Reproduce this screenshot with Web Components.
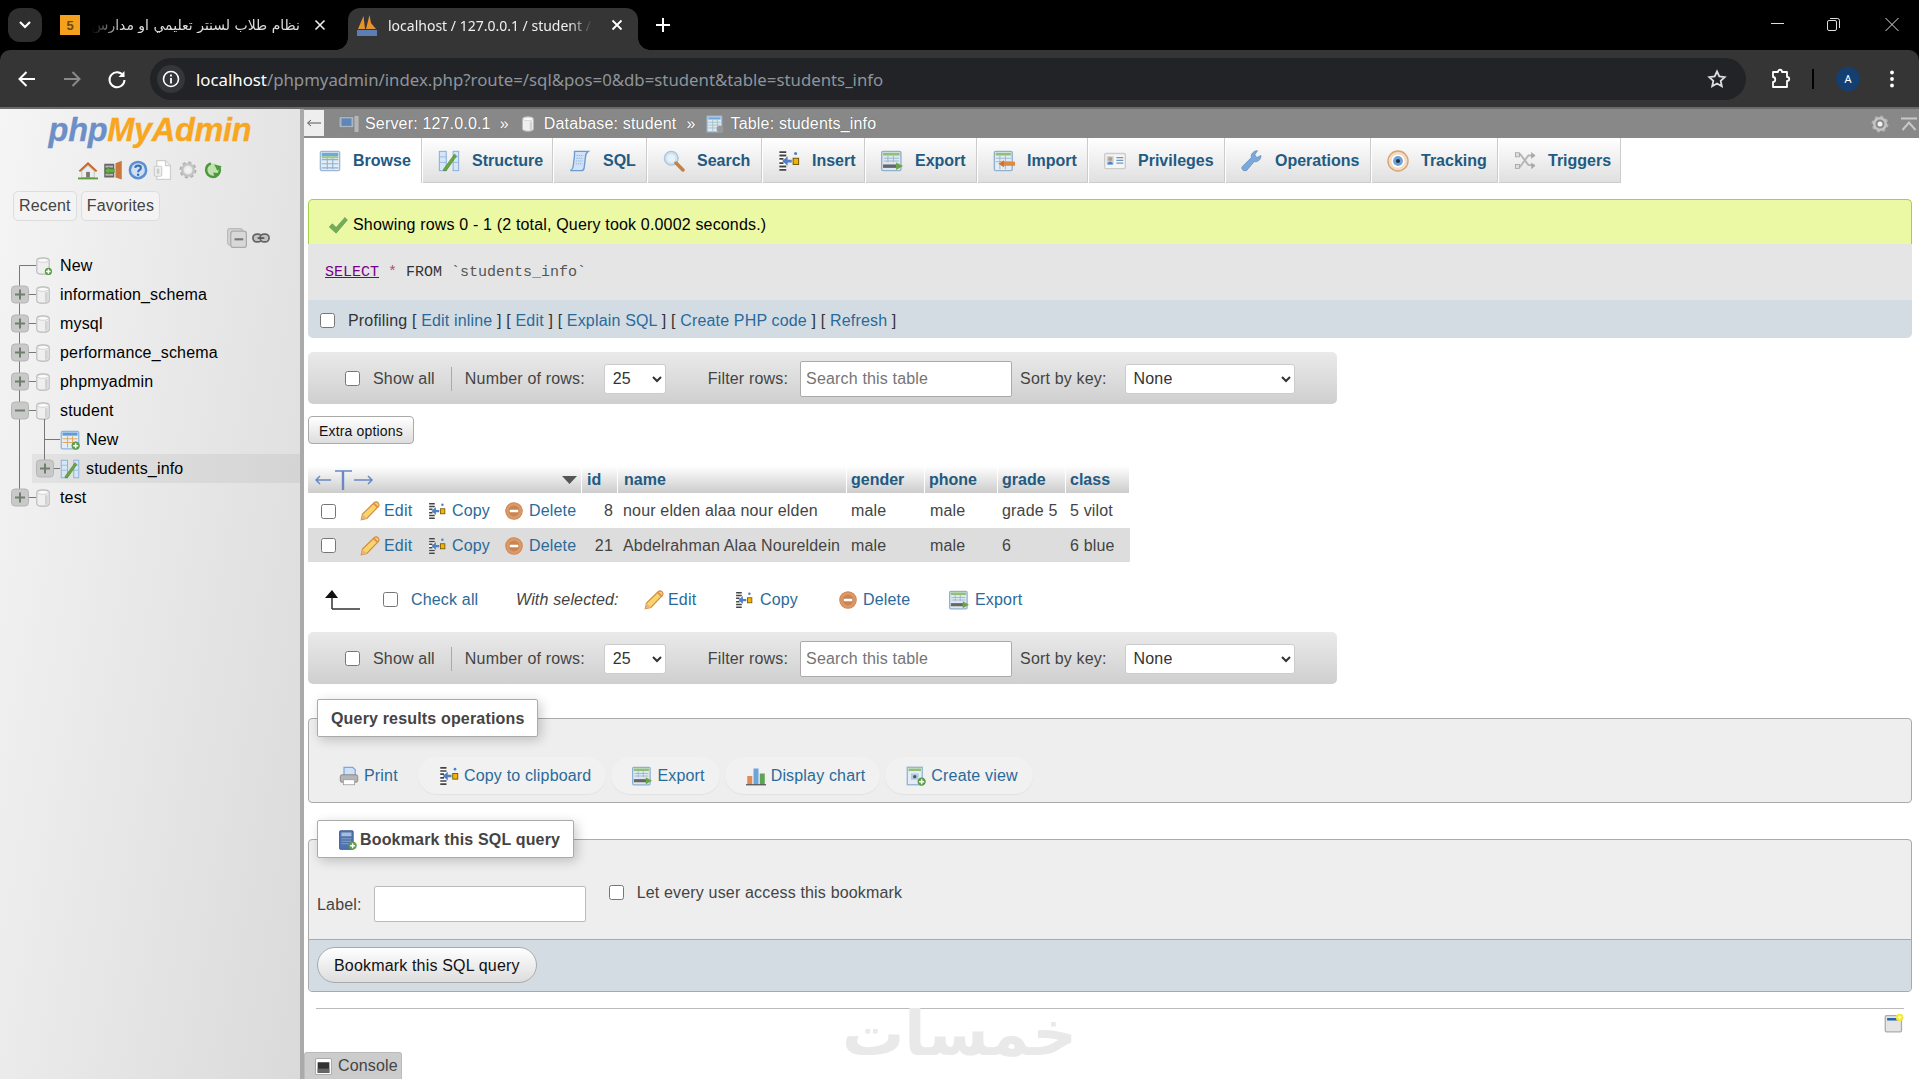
<!DOCTYPE html>
<html lang="en"><head><meta charset="utf-8"><title>phpMyAdmin</title>
<style>
html,body{margin:0;padding:0;height:100%;overflow:hidden;background:#fff;font:16px "Liberation Sans",Arial,sans-serif;color:#444;letter-spacing:.17px}
body{display:flex;flex-direction:column;height:1079px}
pma-app{flex:1;min-height:0}
</style>
<script>
const ICONS={
home:'<path d="M0.5 8.5 8 1.5l7.5 7-1.2 1L8 4 1.7 9.500z" fill="#c9692d"/><path d="M3 9 8 4.500 13 9v5H3z" fill="#eee" stroke="#aaa" stroke-width=".5"/><rect x="6.500" y="9.500" width="3" height="4.500" fill="#777"/><rect x="0" y="14" width="16" height="1.500" fill="#5e9a3c"/>',
exit:'<rect x="1" y="3" width="8" height="11" fill="#666"/><rect x="2" y="4.500" width="6" height="1.500" fill="#bbb"/><rect x="2" y="11" width="6" height="1.500" fill="#bbb"/><path d="M10 2.500 15 .5v15l-5-1.500z" fill="#c9773a"/><path d="M1 8.500 5 5.500V7h4v3H5v1.500z" fill="#6aad46" stroke="#3f7d2a" stroke-width=".4"/>',
help:'<circle cx="8" cy="8" r="7.500" fill="#5b8fd0"/><circle cx="8" cy="8" r="5.500" fill="#cfe0f5"/><path d="M5.800 6.300C6 3.900 10.300 3.900 10.300 6.300 10.300 7.900 8.100 7.900 8.100 9.700" fill="none" stroke="#3a6fb5" stroke-width="1.700"/><circle cx="8.100" cy="11.800" r="1" fill="#3a6fb5"/>',
docs:'<path d="M3 .5h7l4 4v11H3z" fill="#fff" stroke="#cfcfcf"/><path d="M10 .5v4h4" fill="#eee" stroke="#cfcfcf"/><rect x="1" y="5" width="6" height="8" rx="1" fill="#eee" stroke="#bbb" stroke-width=".6"/><rect x="3" y="7" width="2" height="4" fill="#ccc"/>',
gear:'<circle cx="8" cy="8" r="5.600" fill="none" stroke="#b0b0b0" stroke-width="2.400" stroke-dasharray="2.400 2"/><circle cx="8" cy="8" r="4.600" fill="none" stroke="#c4c4c4" stroke-width="2"/><circle cx="8" cy="8" r="2" fill="#f2f2f2"/>',
reload:'<circle cx="8" cy="8" r="5.500" fill="#bfe2ae" stroke="#4b9a3a" stroke-width="2" stroke-dasharray="24 8"/><path d="M9 3.500 15 5l-3.500 3.500zM8 10l5 .5-3 4z" fill="#4b9a3a"/>',
collapse:'<rect x=".5" y=".5" width="12" height="13" rx="2" fill="#d5d5d5" stroke="#bbb"/><rect x="3" y="2.500" width="12.500" height="13" rx="2" fill="#d8d8d8" stroke="#aaa"/><rect x="6" y="8.200" width="7" height="1.700" fill="#777"/>',
link:'<rect x=".8" y="4.500" width="8" height="7" rx="3.500" fill="#c4c4c4" stroke="#666" stroke-width="1.500"/><rect x="7.200" y="4.500" width="8" height="7" rx="3.500" fill="#c4c4c4" stroke="#666" stroke-width="1.500"/><rect x="5" y="7.300" width="6" height="1.500" fill="#555"/>',
db:'<path d="M2.500 3c0-3 11-3 11 0v10c0 3-11 3-11 0z" fill="#efefef" stroke="#b9b9b9"/><ellipse cx="8" cy="3" rx="5" ry="1.700" fill="#fafafa" stroke="#c4c4c4" stroke-width=".6"/><path d="M11 5.500v8.500" stroke="#d2d2d2" stroke-width="2.400"/>',
dbnew:'<path d="M2.500 3c0-3 11-3 11 0v10c0 3-11 3-11 0z" fill="#efefef" stroke="#b9b9b9"/><ellipse cx="8" cy="3" rx="5" ry="1.700" fill="#fafafa" stroke="#c4c4c4" stroke-width=".6"/><circle cx="12.800" cy="12.800" r="3.200" fill="#5a9d45"/><path d="M12.800 10.800v4M10.800 12.800h4" stroke="#fff" stroke-width="1.300"/>',
browse:'<rect x="1" y="1" width="14" height="14" rx="1" fill="#e3edf7" stroke="#9bb8d5"/><rect x="2" y="2" width="12" height="2.500" fill="#6fa8dc"/><path d="M2 7h12M2 10h12M2 13h12M6 5v9M10 5v9" stroke="#8fb0cf" stroke-width=".8"/><rect x="2" y="4.500" width="12" height="1.500" fill="#9fca7c"/>',
tablenew:'<rect x="1" y="1" width="14" height="14" rx="1" fill="#e3edf7" stroke="#8fb3dc"/><rect x="2" y="2" width="12" height="2.500" fill="#5f9bd8"/><path d="M2 7h12M2 10h12M6 5v9M10 5v9" stroke="#e0a860" stroke-width=".8"/><circle cx="12.500" cy="12.500" r="3.300" fill="#5a9d45"/><path d="M12.500 10.500v4M10.500 12.500h4" stroke="#fff" stroke-width="1.200"/>',
structure:'<rect x="1" y="1" width="5" height="14" fill="#d6e6f5" stroke="#8fb3dc" stroke-width=".8"/><rect x="11" y="1" width="4" height="14" fill="#d6e6f5" stroke="#8fb3dc" stroke-width=".8"/><path d="M1 5h5M1 9h5M11 5h4M11 9h4" stroke="#8fb3dc" stroke-width=".6"/><path d="M4 14 12 3l1.500 1.300L6 15H4z" fill="#6aa544" stroke="#3f7d2a" stroke-width=".4"/>',
server:'<rect x="0" y="2" width="12" height="9" rx="1" fill="#aab6c4" stroke="#777" stroke-width=".6"/><rect x="2" y="3.500" width="8" height="6" fill="#5f87b5"/><rect x="3" y="11" width="6" height="2" fill="#888"/><rect x="12" y="1" width="4" height="14" fill="#b5b5b5" stroke="#777" stroke-width=".5"/>',
table:'<rect x="1" y="1" width="13" height="14" fill="#dfe9f3" stroke="#9bb8d5"/><rect x="2" y="2" width="11" height="2" fill="#6fa8dc"/><path d="M2 6.500h11M2 9h11M2 11.500h11M6 4v10M10 4v10" stroke="#9bb" stroke-width=".7"/><circle cx="12.500" cy="12.500" r="3" fill="#999"/>',
sql:'<path d="M4 1h10c-1.500 1-2 2-2 4l-1 8c-.2 1.500-1 2-2 2H1c1-.5 1.700-1.200 2-3l1-8C4 2.500 4 2 4 1z" fill="#cfe2f7" stroke="#6d9bd0"/><path d="M5.500 4h5M5.200 6h5M5 8h5M4.800 10h5" stroke="#8db4e0" stroke-width=".8" stroke-dasharray="1 .6"/>',
search:'<circle cx="6" cy="6" r="5" fill="#cfe2f0" stroke="#a8c4dc"/><circle cx="6" cy="6" r="3" fill="#e8f1f8"/><path d="M9.500 9.500 14.500 14.500" stroke="#c9813f" stroke-width="2.600" stroke-linecap="round"/>',
insert:'<rect x="1" y="1" width="5" height="14" fill="#fff"/><path d="M1 1.500h5M1 4h5M1 6.500h3M1 9.500h3M1 12h5M1 14.500h5" stroke="#444" stroke-width="1.300"/><path d="M3 8 7 4.500V7h3v2H7v2.500z" fill="#4f7fc4"/><rect x="11" y="6" width="4" height="4.500" fill="#f4b400" stroke="#6b5200" stroke-width=".7"/><circle cx="12.800" cy="2.500" r="1.100" fill="#4f7fc4"/>',
export:'<rect x="0.500" y="1" width="14" height="14" rx="1" fill="#dde8f2" stroke="#8fb0cf"/><rect x="1.500" y="2" width="12" height="2" fill="#8fc075"/><path d="M2 6h11M2 8h11M5 4v5M9 4v5" stroke="#9db5cc" stroke-width=".7"/><rect x="1.500" y="10.500" width="10" height="2.500" fill="#666"/><path d="M11 9 16 11.700 11 14.500z" fill="#6aa544"/>',
import:'<rect x="1" y="1" width="13" height="14" rx="1" fill="#e3edf7" stroke="#8fb0cf"/><rect x="2" y="2" width="11" height="2" fill="#8fc075"/><path d="M2 6h11M2 8.500h11M5 4v10M9 4v10" stroke="#9db5cc" stroke-width=".7"/><rect x="7" y="8.500" width="9" height="3" fill="#e08a40"/><path d="M4 10 8 7.500v5z" fill="#d9702a"/>',
priv:'<rect x=".5" y="2.500" width="15" height="11" rx="1" fill="#f5f5f5" stroke="#ccc"/><rect x="2" y="4.500" width="5" height="6" fill="#b9cfe6"/><circle cx="4.500" cy="6.500" r="1.500" fill="#cf9a55"/><path d="M2.500 10.500c0-2.500 4-2.500 4 0z" fill="#4f7fc4"/><path d="M9 5.500h5M9 7.500h5M9 9.500h5" stroke="#6f97c0"/>',
ops:'<path d="M2 15c-1.500-.8-1.700-2-1-3L7.500 5.500C7 3 9 .5 12 .5l-2 3 1.500 2 3-1.500c.3 3-2.500 5-5 4.500L4 15z" fill="#7aa8d8" stroke="#5c8bbd" stroke-width=".5"/>',
track:'<circle cx="8" cy="8" r="7.300" fill="#f3dcc3" stroke="#d9a36d"/><circle cx="8" cy="8" r="4.800" fill="#fff"/><circle cx="8" cy="8" r="3.600" fill="#6fa3d8"/><circle cx="8" cy="8" r="1.500" fill="#234"/>',
triggers:'<path d="M1 3h3.500l6 8H15M1 12h3.500l6-8H15" fill="none" stroke="#b5b5b5" stroke-width="1.400"/><path d="M12.500 1.500 15.500 4l-3 2.500zM12.500 9 15.500 11.500l-3 2.500z" fill="#a8a8a8"/><rect x="1" y="2" width="3" height="3" fill="#ddd" stroke="#999" stroke-width=".5"/><rect x="1" y="10.500" width="3" height="3" fill="#ddd" stroke="#999" stroke-width=".5"/>',
check:'<path d="M1 9.500 3.500 7 6.500 10 13.500 2 15.500 4 6.500 14.500z" fill="#74ad5a" stroke="#5c9444" stroke-width=".5"/>',
edit:'<path d="M1 15l1-4.500L11.500 1.200c1-.8 2.200-.6 3 .3s.9 2 .2 2.900L5.500 14z" fill="#f7d56b" stroke="#d28a3c" stroke-width=".9"/><path d="M1 15l1-4.500 3.500 3.500z" fill="#eab37a"/><path d="M11 2l3.500 3.300" stroke="#e08c5c" stroke-width="1.400"/>',
del:'<circle cx="8" cy="8" r="7.300" fill="#db9a6a" stroke="#cf8550"/><circle cx="8" cy="8" r="4.800" fill="#c98450"/><rect x="4.200" y="6.900" width="7.600" height="2.300" rx=".6" fill="#fff"/>',
print:'<path d="M4 1h7l2 2v5H4z" fill="#cfe2f7" stroke="#7ea8d5"/><rect x="1" y="7" width="14" height="6" rx="1.500" fill="#b5b5b5" stroke="#777" stroke-width=".6"/><rect x="3.500" y="11" width="9" height="4" fill="#fff" stroke="#999" stroke-width=".6"/>',
chart:'<rect x="1" y="8" width="4" height="7" fill="#e08d55"/><rect x="6" y="2" width="4" height="13" fill="#6aa5dd"/><rect x="11" y="6" width="4" height="9" fill="#5fa356"/><rect x="0" y="14.500" width="16" height="1" fill="#555"/>',
view:'<rect x="1" y="1" width="12" height="14" fill="#e3edf7" stroke="#8fb0cf"/><rect x="2" y="2" width="10" height="2" fill="#8fc075"/><rect x="4" y="6" width="6" height="5" fill="#b5c9dd"/><circle cx="7" cy="8.500" r="1.300" fill="#456"/><circle cx="12.500" cy="12.500" r="3.300" fill="#5a9d45"/><path d="M12.500 10.500v4M10.500 12.500h4" stroke="#fff" stroke-width="1.200"/>',
bookmark:'<rect x="2" y="0.500" width="11" height="15" rx="1" fill="#4f72ae" stroke="#33508a" stroke-width=".6"/><rect x="3.500" y="2" width="8" height="3" fill="#a9bcdc"/><path d="M3.500 7h8M3.500 9h8M3.500 11h6" stroke="#8ea5cf" stroke-width=".7"/><circle cx="12.500" cy="12.500" r="3.300" fill="#5a9d45"/><path d="M12.500 10.500v4M10.500 12.500h4" stroke="#fff" stroke-width="1.200"/>',
console:'<rect x=".5" y=".5" width="15" height="15" rx="1" fill="#fff" stroke="#aaa"/><rect x="2.500" y="4" width="11" height="10" fill="#333"/><rect x="2.500" y="10" width="11" height="4" fill="#666"/>',
pagesettings:'<rect x="1" y="2" width="13" height="13" rx="1" fill="#e4e4e4" stroke="#aaa"/><rect x="2.500" y="4" width="9" height="2" fill="#2a62a8"/><circle cx="12.500" cy="3.500" r="3" fill="#f0e83c"/><path d="M12.500 2v3M11 3.500h3" stroke="#fff" stroke-width=".9"/>'
};
function icon(n,s=20,extra=''){return `<svg width="${s}" height="${s}" viewBox="0 0 16 16" style="display:block;flex:none;${extra}" aria-hidden="true">${ICONS[n]}</svg>`}
function makeEl(name,css,render){
  customElements.define(name,class extends HTMLElement{
    connectedCallback(){ if(this.shadowRoot) return;
      this.attachShadow({mode:'open'}).innerHTML=`<style>${css}</style>${render(this)}`; }
  });
}

/* browser chrome */
makeEl('chrome-frame',`
:host{display:block;flex:none;background:#000;color:#fff;font:14px "Noto Sans","Open Sans",sans-serif;letter-spacing:0}
.strip{height:50px;display:flex;align-items:flex-end;position:relative}
.search{width:34px;height:34px;margin:0 0 8px 8px;background:#2f2f2f;border-radius:12px;display:flex;align-items:center;justify-content:center}
.tab{display:flex;align-items:center;height:42px;box-sizing:border-box;padding-bottom:8px}
.t1{width:284px;margin-left:18px;color:#ddd}
.fav5{width:20px;height:20px;background:#f5a11e;color:#6a4a10;font:700 13px "Liberation Sans",sans-serif;display:flex;align-items:center;justify-content:center;flex:none}
.ar{width:208px;margin-left:12px;direction:rtl;white-space:nowrap;font:14px "DejaVu Sans",sans-serif;-webkit-mask-image:linear-gradient(to right,transparent,#000 30px);mask-image:linear-gradient(to right,transparent,#000 30px)}
.x{margin-left:auto;display:flex;margin-right:18px}
.t2{width:290px;margin-left:4px;background:#353535;border-radius:12px 12px 0 0;position:relative;padding-left:9px;color:#f0f0f0}
.t2:before,.t2:after{content:"";position:absolute;bottom:0;width:12px;height:12px;background:radial-gradient(circle at 0 0,transparent 11.5px,#353535 12px)}
.t2:before{left:-12px}.t2:after{right:-12px;transform:scaleX(-1)}
.ttl{margin-left:11px;width:205px;white-space:nowrap;-webkit-mask-image:linear-gradient(to left,transparent,#000 24px);mask-image:linear-gradient(to left,transparent,#000 24px)}
.plus{margin:0 0 17px 17px;display:flex}
.win{position:absolute;right:0;top:0;display:flex}
.win svg{display:block}
.bar{height:57px;background:#353535;border-radius:10px 10px 0 0;display:flex;align-items:center;box-sizing:border-box;padding:0 0 0 16px}
.nav{width:22px;height:22px;margin-right:23px;flex:none}
.addr{width:1596px;margin-left:-1px;height:42px;background:#212327;border-radius:21px;display:flex;align-items:center;box-sizing:border-box;padding-left:7px;font-size:16.8px;flex:none;margin-top:1px}
.chip{width:28px;height:28px;background:#34363a;border-radius:50%;display:flex;align-items:center;justify-content:center;flex:none;margin-right:11px}
.url{color:#8f949a;flex:1;white-space:nowrap}.url b{color:#fff;font-weight:400}
.star{margin-right:19px;display:flex}
.tools{display:flex;align-items:center}
.line{height:2px;background:#6a6a6a}
`,()=>`
<div class="strip">
 <div class="search"><svg width="14" height="10" viewBox="0 0 14 10"><path d="M2 2l5 5 5-5" fill="none" stroke="#fff" stroke-width="2.200"/></svg></div>
 <div class="tab t1"><span class="fav5">5</span><span class="ar">نظام طلاب لسنتر تعليمي او مدارس</span>
  <span class="x"><svg width="12" height="12" viewBox="0 0 12 12"><path d="M1.500 1.500l9 9M10.500 1.500l-9 9" stroke="#eee" stroke-width="1.600"/></svg></span></div>
 <div class="tab t2"><svg width="20" height="24" viewBox="0 0 20 24" style="flex:none"><path d="M1 16 6.500 3l1.500 13zM9 16l3.500-14 1.500 8 5 6z" fill="#e8922a"/><rect x="0" y="17" width="20" height="6" fill="#5b7fb5"/></svg>
  <span class="ttl">localhost / 127.0.0.1 / student /</span>
  <span class="x" style="margin-right:15px"><svg width="12" height="12" viewBox="0 0 12 12"><path d="M1.500 1.500l9 9M10.500 1.500l-9 9" stroke="#fff" stroke-width="1.800"/></svg></span></div>
 <div class="plus"><svg width="16" height="16" viewBox="0 0 16 16"><path d="M8 1v14M1 8h14" stroke="#fff" stroke-width="2"/></svg></div>
 <div class="win">
  <svg width="57" height="46" viewBox="0 0 57 46"><path d="M13 23.500h13" stroke="#ddd"/></svg>
  <svg width="58" height="46" viewBox="0 0 58 46"><rect x="12.500" y="20.500" width="9" height="10" rx="1.500" fill="none" stroke="#ddd"/><path d="M15 18.500h7.500a2 2 0 0 1 2 2V28" fill="none" stroke="#ddd"/></svg>
  <svg width="46" height="46" viewBox="0 0 46 46"><path d="M12.500 18l13 13M25.500 18l-13 13" stroke="#ddd"/></svg>
 </div>
</div>
<div class="bar">
 <svg class="nav" viewBox="0 0 22 22"><path d="M19 11H4M10.500 4 3.500 11l7 7" fill="none" stroke="#fff" stroke-width="2"/></svg>
 <svg class="nav" viewBox="0 0 22 22"><path d="M3 11h15M11.500 4l7 7-7 7" fill="none" stroke="#8a8a8a" stroke-width="2"/></svg>
 <svg class="nav" viewBox="0 0 22 22"><path d="M17.500 8A7.500 7.500 0 1 0 18.500 12" fill="none" stroke="#fff" stroke-width="2"/><path d="M18.500 3v6h-6z" fill="#fff"/></svg>
 <div class="addr"><span class="chip"><svg width="18" height="18" viewBox="0 0 18 18"><circle cx="9" cy="9" r="7.500" fill="none" stroke="#fff" stroke-width="1.600"/><path d="M9 8v5.500M9 4.500v2" stroke="#fff" stroke-width="1.800"/></svg></span>
  <span class="url"><b>localhost</b>/phpmyadmin/index.php?route=/sql&amp;pos=0&amp;db=student&amp;table=students_info</span>
  <span class="star"><svg width="20" height="20" viewBox="0 0 20 20"><path d="M10 2.500l2.300 5 5.400.6-4 3.700 1.100 5.400L10 14.500l-4.800 2.700 1.100-5.400-4-3.700 5.400-.6z" fill="none" stroke="#ddd" stroke-width="1.800"/></svg></span></div>
 <div class="tools">
  <svg width="22" height="22" viewBox="0 0 22 22" style="margin-left:24px"><path d="M3 4h5c0-3 4-3 4 0h5v5c3 0 3 4 0 4v6H3v-5c3 0 3-5 0-5z" fill="none" stroke="#fff" stroke-width="1.800" stroke-linejoin="round"/></svg>
  <span style="width:2px;height:20px;background:#000;margin-left:20px"></span>
  <span style="width:24px;height:24px;border-radius:50%;background:#153f70;margin-left:22px;display:flex;align-items:center;justify-content:center;font:11px 'Noto Sans',sans-serif">A</span>
  <svg width="6" height="18" viewBox="0 0 6 18" style="margin-left:29px"><circle cx="3" cy="2.500" r="1.900" fill="#fff"/><circle cx="3" cy="9" r="1.900" fill="#fff"/><circle cx="3" cy="15.500" r="1.900" fill="#fff"/></svg>
 </div>
</div><div class="line"></div>`);

makeEl('pma-app',':host{display:flex;overflow:hidden}',()=>'<pma-sidebar></pma-sidebar><pma-main></pma-main>');

/* navigation tree row */
function connector(h){
 const d=+(h.getAttribute('depth')||0),k=h.getAttribute('exp'),pos=h.getAttribute('pos')||'';
 const W=d?60:36;let s='';
 const y0=pos==='first'?14.5:0,y1=pos==='last'?14.5:29;
 s+=`<path d="M19.500 ${y0}V${y1}" stroke="#777"/>`;
 if(d===0)s+=`<path d="M19.500 14.500H36" stroke="#777"/>`;
 if(d===1){const ny0=pos==='nfirst'?-6:0,ny1=pos==='nlast'?14.5:29;
   s+=`<path d="M44.500 ${ny0}V${ny1}M44.500 14.500H60" stroke="#777"/>`}
 if(k){const cx=d?45:20,x=cx-8.5;
   s+=`<rect x="${x}" y="6" width="17" height="17" rx="3.500" fill="#c9c9c9" stroke="#b5b5b5"/>`;
   s+=`<path d="M${cx-5} 14.500h10" stroke="#6f7f6f" stroke-width="2"/>`;
   if(k==='plus')s+=`<path d="M${cx} 9.500v10" stroke="#6f7f6f" stroke-width="2"/>`;}
 return `<svg width="${W}" height="29" viewBox="0 0 ${W} 29" style="display:block;flex:none;overflow:visible">${s}</svg>`;
}
makeEl('tree-row',`
:host{display:flex;align-items:center;height:29px;color:#000;font-size:16px;white-space:nowrap}
:host([hl]){background:linear-gradient(to right,transparent 32px,rgba(0,0,0,.055) 32px)}
.t{margin-left:8px}
:host([depth="1"]) .t{margin-left:6px}
`,h=>`${connector(h)}${+h.getAttribute('depth')?icon(h.getAttribute('icon'),20):icon(h.getAttribute('icon'),18,'margin-left:-2px')}<span class="t"><slot></slot></span>`);

makeEl('pma-sidebar',`
:host{display:block;flex:none;box-sizing:border-box;background:linear-gradient(100deg,#f5f5f5,#dadada);border-right:4px solid #aaa;width:304px}
.logo{height:38px;padding-top:2px;text-align:center;font:italic 700 32.500px/38px "Liberation Sans",sans-serif;letter-spacing:-.3px;-webkit-text-stroke:.3px currentColor}
.logo i{color:#6c8fc7}.logo b{color:#f8a620}
.ic{display:flex;justify-content:center;gap:5px;margin-top:11px;height:21px}
.tabs{display:flex;gap:4px;margin:10px 0 0 13px}
.tabs span{height:30px;box-sizing:border-box;padding:0 5px;line-height:28px;background:#f3f3f3;border:1px solid #ddd;border-radius:5px;color:#444}
.ctl{display:flex;align-items:center;gap:5px;margin:7px 0 0 227px;height:20px}
.tree{margin-top:3px}
`,()=>`
<div class="logo"><i>php</i><b>MyAdmin</b></div>
<div class="ic">${['home','exit','help','docs','gear','reload'].map(n=>icon(n,20)).join('')}</div>
<div class="tabs"><span>Recent</span><span>Favorites</span></div>
<div class="ctl">${icon('collapse',20)}${icon('link',18)}</div>
<div class="tree">
<tree-row icon="dbnew" pos="first">New</tree-row>
<tree-row icon="db" exp="plus">information_schema</tree-row>
<tree-row icon="db" exp="plus">mysql</tree-row>
<tree-row icon="db" exp="plus">performance_schema</tree-row>
<tree-row icon="db" exp="plus">phpmyadmin</tree-row>
<tree-row icon="db" exp="minus">student</tree-row>
<tree-row icon="tablenew" depth="1" pos="nfirst">New</tree-row>
<tree-row icon="structure" depth="1" pos="nlast" exp="plus" hl>students_info</tree-row>
<tree-row icon="db" exp="plus" pos="last">test</tree-row>
</div>`);

makeEl('pma-main',`
:host{display:block;flex:1;min-width:0;position:relative;background:#fff;height:100%}
.page{padding:16px 7px 0 4px}
pma-nav{margin-top:14px}
.wm{position:absolute;left:538px;top:890px;font:700 62px/70px "DejaVu Sans",sans-serif;letter-spacing:0;color:#e9e9e9;direction:rtl;white-space:nowrap}
hr{border:0;border-top:1px solid #bbb;height:0;margin:16px 8px 0 8px}
.pg{display:flex;justify-content:flex-end;padding:4px 8px 0 0}
`,()=>`
<pma-crumbs></pma-crumbs>
<pma-tabs>
 <pma-tab icon="browse" w="119" active>Browse</pma-tab>
 <pma-tab icon="structure" w="131">Structure</pma-tab>
 <pma-tab icon="sql" w="94">SQL</pma-tab>
 <pma-tab icon="search" w="115">Search</pma-tab>
 <pma-tab icon="insert" w="103">Insert</pma-tab>
 <pma-tab icon="export" w="112">Export</pma-tab>
 <pma-tab icon="import" w="111">Import</pma-tab>
 <pma-tab icon="priv" w="137">Privileges</pma-tab>
 <pma-tab icon="ops" w="146">Operations</pma-tab>
 <pma-tab icon="track" w="127">Tracking</pma-tab>
 <pma-tab icon="triggers" w="123">Triggers</pma-tab>
</pma-tabs>
<div class="page">
 <pma-result></pma-result>
 <pma-nav></pma-nav>
 <pma-table></pma-table>
 <pma-nav style="margin-top:0"></pma-nav>
 <pma-ops></pma-ops>
 <pma-bookmark></pma-bookmark>
 <hr>
 <div class="pg">${icon('pagesettings',20)}</div>
</div>
<div class="wm">خمسات</div>
<pma-console></pma-console>`);

makeEl('pma-crumbs',`
:host{display:flex;align-items:center;height:29px;background:#888;color:#fff;white-space:nowrap;text-shadow:0 0 1px #555}
.back{width:20px;height:26px;background:#eee;align-self:flex-start;margin:1px 15px 0 0;display:flex;align-items:center;justify-content:center;flex:none}
.r{margin-left:auto;display:flex;align-items:center;gap:11px;padding-right:2px}
`,()=>`
<span class="back"><svg width="16" height="8" viewBox="0 0 16 8"><path d="M15 4H2M5 1 1.500 4 5 7" fill="none" stroke="#555"/></svg></span>
${icon('server',20,'margin-right:6px')}<span>Server: 127.0.0.1</span><span style="margin:0 11px 0 9px">»</span>
${icon('db',16,'margin-right:8px')}<span>Database: student</span><span style="margin:0 10px 0 10px">»</span>
${icon('table',18,'margin-right:7px')}<span>Table: students_info</span>
<span class="r">${icon('gear',20)}<svg width="16" height="14" viewBox="0 0 16 14"><path d="M0 1.500h16M1.500 13 8 5.500l6.500 7.500" fill="none" stroke="#c8c8c8" stroke-width="2"/></svg></span>`);

makeEl('pma-tabs',':host{display:flex;height:45px;background:#fff}',()=>'<slot></slot>');
makeEl('pma-tab',`
:host{display:flex;align-items:center;box-sizing:border-box;height:45px;padding-left:15px;background:linear-gradient(#fff,#dfdfdf);border-right:1px solid #fff;box-shadow:inset -1px 0 0 #ccc, inset 0 -1px 0 #ccc;font-weight:700;color:#235a81;white-space:nowrap;flex:none;letter-spacing:0}
:host([active]){background:#fff;box-shadow:inset -1px 0 0 #ccc}
span{display:inline-block;margin-left:12px}
`,h=>{h.style.width=h.getAttribute('w')+'px';return `${icon(h.getAttribute('icon'),22)}<span><slot></slot></span>`});

const A='color:#2a6a9a;text-decoration:none';
makeEl('pma-result',`
:host{display:block}
.ok{height:45px;box-sizing:border-box;background:#ebf8a4;border:1px solid #a2d246;border-bottom:0;border-radius:5px 5px 0 0;display:flex;align-items:center;padding:6px 0 0 19px;color:#000}
.ok span{margin-left:5px}
.sql{height:56px;box-sizing:border-box;padding:1px 0 0 17px;background:#e5e5e5;display:flex;align-items:center;font:15px "Liberation Mono",monospace;letter-spacing:0;color:#333;white-space:pre}
.sql u{color:#708;text-decoration:underline #708}.sql em{font-style:normal;color:#c0447a}.sql s{text-decoration:none;color:#555}
.prof{height:38px;box-sizing:border-box;padding:3px 0 0 12px;background:#d3dce3;display:flex;align-items:center;border-radius:0 0 5px 5px;white-space:pre;color:#333}
input{width:15px;height:15px;margin:0 13px 0 0}
a{${A}}
`,()=>`
<div class="ok">${icon('check',20)}<span>Showing rows 0 - 1 (2 total, Query took 0.0002 seconds.)</span></div>
<div class="sql"><span><u>SELECT</u> <em>*</em> FROM <s>\`students_info\`</s></span></div>
<div class="prof"><input type="checkbox"><span>Profiling [ <a>Edit inline</a> ] [ <a>Edit</a> ] [ <a>Explain SQL</a> ] [ <a>Create PHP code</a> ] [ <a>Refresh</a> ]</span></div>`);

makeEl('pma-nav',`
:host{display:flex;align-items:center;width:1029px;height:52px;box-sizing:border-box;background:linear-gradient(#eaeaea,#cfcfcf);border-radius:5px;color:#444;white-space:nowrap;padding:1px 0 0 37px}
input[type=checkbox]{width:15px;height:15px;margin:0 13px 0 0}
.sep{width:1px;height:24px;background:#aaa;margin:0 13px 0 16px}
select{height:30px;font:16px "Liberation Sans",sans-serif;letter-spacing:.17px;color:#333;background:#fff;border:1px solid #ccc;border-radius:3px;padding:0 4px;box-sizing:border-box}
.t{width:212px;height:36px;box-sizing:border-box;border:1px solid #aaa;border-radius:2px;font:16px "Liberation Sans",sans-serif;letter-spacing:.17px;padding:0 5px;margin:0 8px 0 12px}
.t::placeholder{color:#757575}
`,()=>`
<input type="checkbox"><span>Show all</span><span class="sep"></span>
<span>Number of rows:</span>
<select style="width:62px;margin:0 42px 0 19px"><option>25</option></select>
<span>Filter rows:</span>
<input class="t" type="text" placeholder="Search this table">
<span>Sort by key:</span>
<select style="width:170px;margin-left:18px"><option>None</option></select>`);

makeEl('row-action',`
:host{display:flex;align-items:center;color:#2a6a9a;white-space:nowrap}
span{margin-left:var(--g,4px)}
`,h=>`${icon(h.getAttribute('icon'),h.getAttribute('s')||20)}<span><slot></slot></span>`);

const rows=[['8','nour elden alaa nour elden','male','male','grade 5','5 vilot'],['21','Abdelrahman Alaa Noureldein','male','male','6','6 blue']];
makeEl('pma-table',`
:host{display:block}
.x{display:block;width:106px;height:28px;box-sizing:border-box;margin:12px 0 22px;background:linear-gradient(#fff,#ddd);border:1px solid #aaa;border-radius:4px;font:14px/28px "Liberation Sans",sans-serif;color:#111;text-align:center}
table{border-collapse:separate;border-spacing:0;table-layout:fixed;width:822px;color:#444}
th{height:27px;padding:0 0 0 4px;text-align:left;background:linear-gradient(#fff,#ccc);border-right:1px solid #fff;color:#235a81;font-weight:700;box-sizing:border-box;overflow:hidden;letter-spacing:0}
td{padding:2px 0 0 5px;white-space:nowrap;height:34.500px;box-sizing:border-box}
tr.o td{background:#fff}tr.e td{background:#ddd}
td.id{text-align:right;padding:2px 5px 0 0}
.c{padding-left:13px}
input{display:block;width:15px;height:15px;margin:0}
.first{padding:0}
.firstin{display:flex;align-items:center;justify-content:space-between;padding:0 3px 0 7px}
.bulk{display:flex;align-items:center;height:35px;margin:20px 0 15px 17px;white-space:nowrap}
a{${A}}
`,()=>`
<div class="x">Extra options</div>
<table><colgroup><col style="width:38px"><col style="width:74px"><col style="width:77px"><col style="width:85px"><col style="width:36px"><col style="width:229px"><col style="width:78px"><col style="width:73px"><col style="width:68px"><col style="width:64px"></colgroup>
<thead><tr><th colspan="4" class="first"><div class="firstin"><svg width="59" height="24" viewBox="0 0 59 24"><path d="M1 12H16M5 8 1 12l4 4M20 3h17M39 12h18M53 8l4 4-4 4" fill="none" stroke="#6a88c4" stroke-width="1.500"/><path d="M28 22V3" stroke="#6a88c4" stroke-width="2.400"/></svg><svg width="16" height="10" viewBox="0 0 16 10"><path d="M0 1h15L7.500 9z" fill="#555"/></svg></div></th>
<th style="padding-left:5px">id</th><th style="padding-left:6px">name</th><th>gender</th><th>phone</th><th>grade</th><th>class</th></tr></thead>
<tbody>${rows.map((r,i)=>`<tr class="${i?'e':'o'}"><td class="c"><input type="checkbox"></td>
<td style="padding-left:14px"><row-action icon="edit">Edit</row-action></td><td style="padding-left:8px"><row-action icon="insert" style="--g:6px" s="18">Copy</row-action></td><td style="padding-left:8px"><row-action icon="del" style="--g:6px" s="18">Delete</row-action></td>
<td class="id">${r[0]}</td><td>${r[1]}</td><td style="padding-left:4px">${r[2]}</td><td>${r[3]}</td><td style="padding-left:4px">${r[4]}</td><td style="padding-left:4px">${r[5]}</td></tr>`).join('')}</tbody></table>
<div class="bulk"><svg width="35" height="22" viewBox="0 0 35 22" style="flex:none"><path d="M7 20V4M7 20H35" fill="none" stroke="#333" stroke-width="1.500"/><path d="M0 9 7 1l6 8z" fill="#111"/></svg>
<input type="checkbox" style="margin-left:23px"><a style="margin-left:13px;width:67px">Check all</a>
<i style="margin-left:38px;width:102px">With selected:</i>
<row-action icon="edit" style="margin-left:26px;width:91px">Edit</row-action>
<row-action icon="insert" s="18" style="width:104px;--g:7px">Copy</row-action>
<row-action icon="del" s="18" style="width:110px;--g:6px">Delete</row-action>
<row-action icon="export" style="--g:6px">Export</row-action></div>`);

makeEl('field-box',`
:host{display:block}
.lg{position:relative;z-index:1;display:inline-flex;align-items:center;height:38px;box-sizing:border-box;margin-left:9px;padding:2px 13px 0;background:#fff;border:1px solid #aaa;border-radius:2px;box-shadow:3px 3px 12px rgba(0,0,0,.2);font-weight:700;color:#444;vertical-align:top;white-space:nowrap}
.box{margin-top:-19px;background:#eee;border:1px solid #aaa;border-radius:4px;box-sizing:border-box}
`,h=>`<div class="lg"><slot name="legend"></slot></div><div class="box" style="min-height:${h.getAttribute('bh')||0}px"><slot></slot></div>`);

makeEl('pma-ops',`
:host{display:block;margin-top:15px}
.r{display:flex;align-items:center;padding:38px 0 8px 14px}
.p{display:flex;align-items:center;height:37px;border-radius:19px;color:#2a6a9a;white-space:nowrap;box-sizing:border-box;padding:0 15px 0 21px;margin-right:5px;background:#f1f1f1;box-shadow:0 1px 1px #e2e2e2}
.p span{margin-left:5px}
.n{background:none;box-shadow:none;padding:0 15px 0 16px;width:95px;margin-right:0}
`,()=>`
<field-box bh="85"><span slot="legend">Query results operations</span>
<div class="r"><div class="p n">${icon('print',20)}<span>Print</span></div>
<div class="p">${icon('insert',20)}<span>Copy to clipboard</span></div>
<div class="p">${icon('export',20)}<span>Export</span></div>
<div class="p">${icon('chart',20)}<span>Display chart</span></div>
<div class="p">${icon('view',20)}<span>Create view</span></div></div></field-box>`);

makeEl('pma-bookmark',`
:host{display:block;margin-top:17px}
.r{display:flex;align-items:flex-start;height:99px;padding:25px 0 0 8px;box-sizing:border-box;color:#444}
.r span{white-space:nowrap}
.txt{width:212px;height:36px;box-sizing:border-box;border:1px solid #bbb;border-radius:2px;background:#fff;margin:21px 23px 0 12px}
.f{height:52px;background:#d3dce3;border-top:1px solid #aaa;box-sizing:border-box;padding:7px 0 0 8px;border-radius:0 0 4px 4px}
.b{display:inline-block;height:36px;line-height:36px;box-sizing:border-box;padding:0 16px;border:1px solid #aaa;border-radius:18px;background:linear-gradient(#fff,#ddd);color:#111;white-space:nowrap}
input[type=checkbox]{width:15px;height:15px;margin:20px 13px 0 0}
`,()=>`
<field-box bh="152"><span slot="legend" style="display:inline-flex;align-items:center;gap:3px;margin-left:6px">${icon('bookmark',20)}Bookmark this SQL query</span>
<div class="r"><span style="margin-top:30.500px">Label:</span><input class="txt" type="text"><input type="checkbox"><span style="margin-top:18.500px">Let every user access this bookmark</span></div>
<div class="f"><span class="b">Bookmark this SQL query</span></div></field-box>`);

makeEl('pma-console',`
:host{position:absolute;left:0;bottom:0;width:98px;height:27px;background:#ccc;border-radius:3px 3px 0 0;display:flex;align-items:center;padding-left:10px;box-sizing:border-box;color:#444;border:1px solid #bbb;border-bottom:0}
span{margin-left:6px}
`,()=>`${icon('console',17)}<span>Console</span>`);
</script></head>
<body>
<chrome-frame></chrome-frame>
<pma-app></pma-app>
</body></html>
